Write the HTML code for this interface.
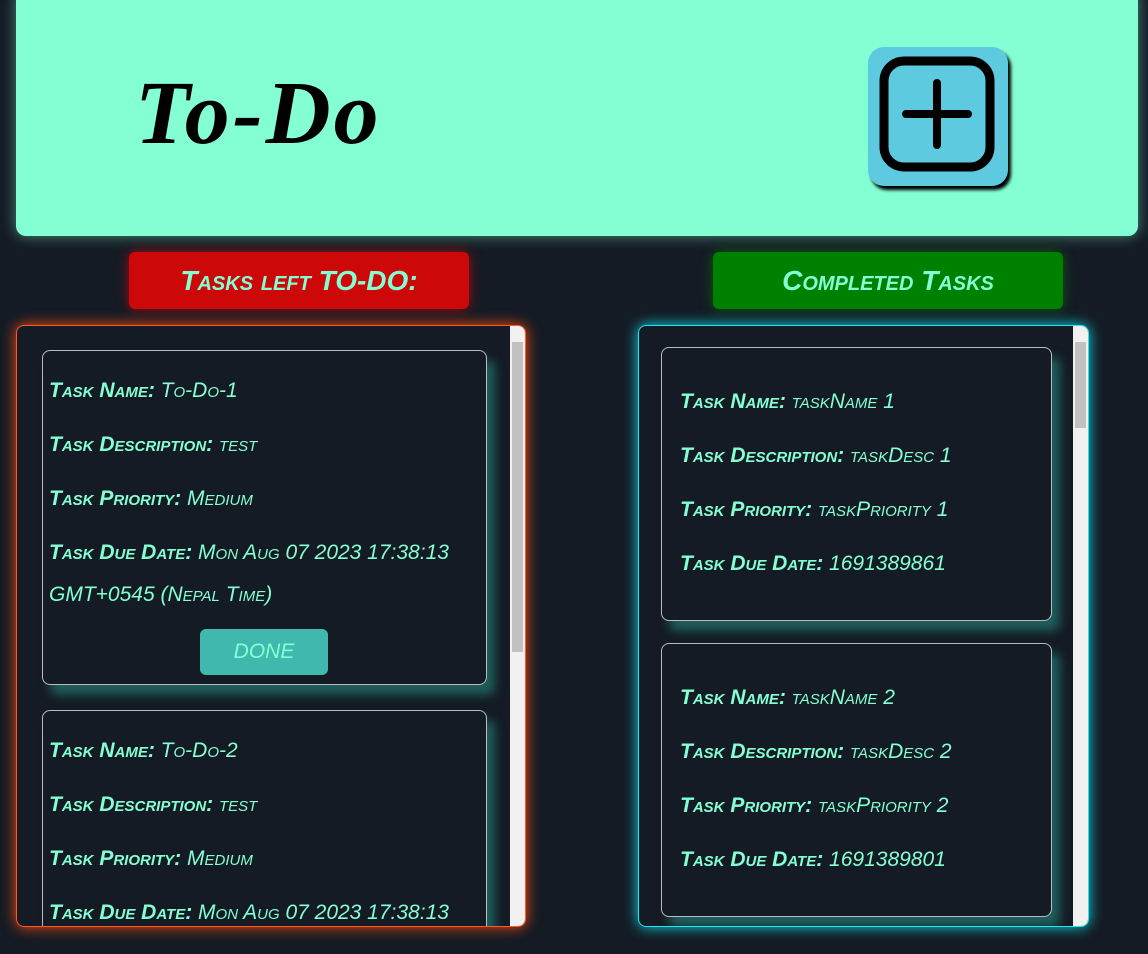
<!DOCTYPE html>
<html><head><style>
body{margin:0;width:1148px;height:954px;background:#141b24;overflow:hidden;font-family:"Liberation Sans",sans-serif;color:#84ffd2;position:relative}
.hdr{position:absolute;left:16px;top:-10px;width:1122px;height:246px;background:#84ffd4;border-radius:10px;box-shadow:0 0 14px rgba(132,255,212,.5)}
.title{position:absolute;left:135px;top:62px;font-size:90px;color:#000;font-style:italic;font-weight:bold;letter-spacing:3px;font-family:"Liberation Serif",serif}
.plus{position:absolute;left:868px;top:47px;width:140px;height:139px;background:#5ecae0;border-radius:16px;box-shadow:3px 4px 3px #000}
.lbl{position:absolute;top:252px;height:57px;border-radius:6px;font-size:28px;font-weight:bold;font-variant:small-caps;display:flex;align-items:center;justify-content:center;font-style:italic}
.panel{position:absolute;top:325px;height:600px;border-radius:8px;overflow:hidden}
.sb{position:absolute;right:0;top:0;width:15px;height:100%;background:#f1f1f1}
.sb .th{position:absolute;left:2px;width:11px;background:#c1c1c1}
.card{position:absolute;border:1px solid #bbb;border-radius:8px;background:#141b24;box-shadow:8px 10px 10px rgba(40,150,140,.55)}
.card p{margin:0;position:absolute;left:6px;font-size:21px;font-variant:small-caps;white-space:nowrap;font-style:italic}
.r p{left:18px}
.card b{font-weight:bold}
</style></head><body>
<div class="hdr"></div>
<div class="title">To-Do</div>
<div class="plus"><svg width="140" height="139" viewBox="0 0 140 139"><rect x="16" y="14" width="106" height="106" rx="20" fill="none" stroke="#000" stroke-width="9"/><path d="M69 36v62M38 67h62" stroke="#000" stroke-width="8" stroke-linecap="round"/></svg></div>
<div class="lbl" style="left:129px;width:340px;background:#cc0808;box-shadow:0 0 12px rgba(255,0,0,.6)">Tasks left TO-DO:</div>
<div class="lbl" style="left:713px;width:350px;background:#008000;box-shadow:0 0 12px rgba(0,160,0,.5)">Completed Tasks</div>

<div class="panel" style="left:16px;width:508px;border:1px solid #ff5a1f;box-shadow:0 0 14px #ff4a10">
<div class="card" style="left:25px;top:24px;width:443px;height:333px">
<p style="top:28px"><b>Task Name:</b> To-Do-1</p>
<p style="top:82px"><b>Task Description:</b> test</p>
<p style="top:136px"><b>Task Priority:</b> Medium</p>
<p style="top:190px"><b>Task Due Date:</b> Mon Aug 07 2023 17:38:13</p>
<p style="top:232px">GMT+0545 (Nepal Time)</p>
<div style="position:absolute;left:157px;top:278px;width:128px;height:46px;background:#40b8ae;border-radius:6px;color:#84ffd2;font-size:21px;display:flex;align-items:center;justify-content:center;font-style:italic">DONE</div>
</div>
<div class="card" style="left:25px;top:384px;width:443px;height:333px">
<p style="top:28px"><b>Task Name:</b> To-Do-2</p>
<p style="top:82px"><b>Task Description:</b> test</p>
<p style="top:136px"><b>Task Priority:</b> Medium</p>
<p style="top:190px"><b>Task Due Date:</b> Mon Aug 07 2023 17:38:13</p>
</div>
<div class="sb"><div class="th" style="top:16px;height:310px"></div></div>
</div>

<div class="panel" style="left:638px;width:449px;border:1px solid #20e8f0;box-shadow:0 0 14px #10d8e8">
<div class="card r" style="left:22px;top:21px;width:389px;height:272px">
<p style="top:42px"><b>Task Name:</b> taskName 1</p>
<p style="top:96px"><b>Task Description:</b> taskDesc 1</p>
<p style="top:150px"><b>Task Priority:</b> taskPriority 1</p>
<p style="top:204px"><b>Task Due Date:</b> 1691389861</p>
</div>
<div class="card r" style="left:22px;top:317px;width:389px;height:272px">
<p style="top:42px"><b>Task Name:</b> taskName 2</p>
<p style="top:96px"><b>Task Description:</b> taskDesc 2</p>
<p style="top:150px"><b>Task Priority:</b> taskPriority 2</p>
<p style="top:204px"><b>Task Due Date:</b> 1691389801</p>
</div>
<div class="sb"><div class="th" style="top:16px;height:86px"></div></div>
</div>
</body></html>
